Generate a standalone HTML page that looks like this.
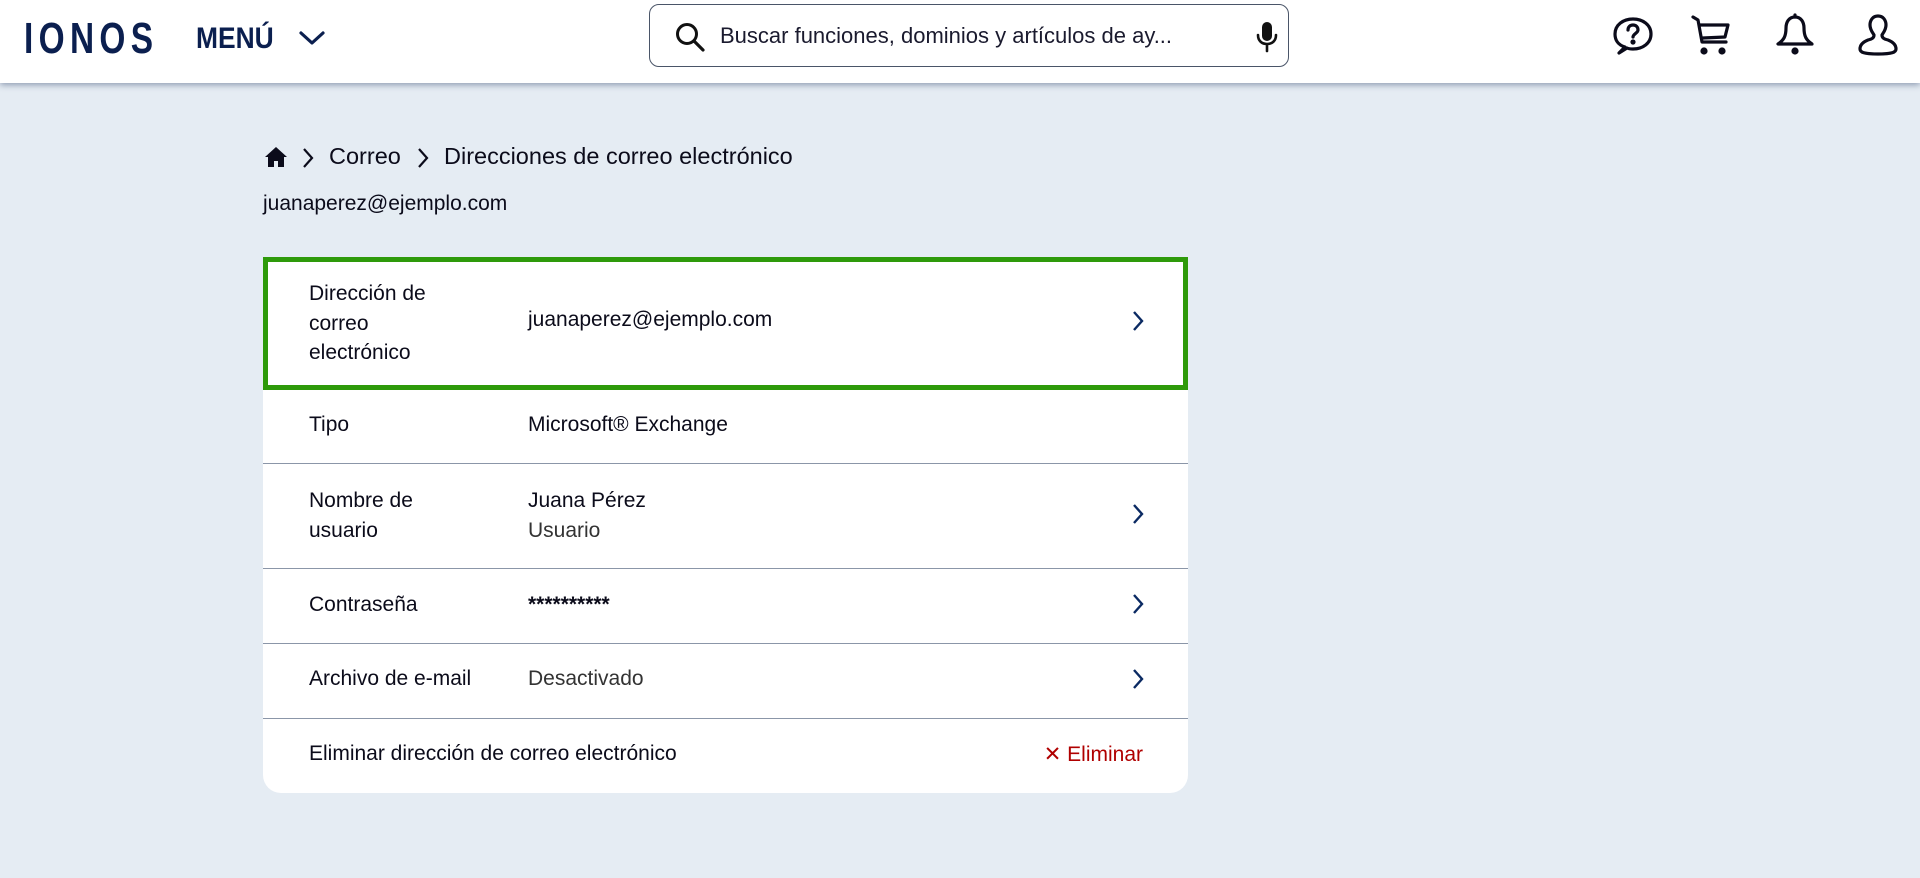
<!DOCTYPE html>
<html><head><meta charset="utf-8"><style>
*{box-sizing:border-box;margin:0;padding:0}
body{width:1920px;height:878px;background:#e5ecf3;font-family:"Liberation Sans",sans-serif;color:#0b0b1a;overflow:hidden;position:relative}
.hdr{position:absolute;left:0;top:0;width:1920px;height:83px;background:#fff;box-shadow:0 2px 6px rgba(40,60,100,.45)}
.logo{position:absolute;left:24px;top:14px;font-size:44px;font-weight:bold;color:#0b1f4f;letter-spacing:7px;transform:scaleX(.76);transform-origin:left;font-family:"Liberation Sans Narrow","Liberation Sans",sans-serif}
.menu{position:absolute;left:196px;top:22px;font-size:30px;font-weight:bold;color:#0b1f4f;transform:scaleX(.88);transform-origin:left}
.search{position:absolute;left:649px;top:4px;width:640px;height:63px;border:1.5px solid #4a5568;border-radius:10px}
.search span{position:absolute;left:70px;top:18px;font-size:22px;color:#1a1a2e;white-space:nowrap}
.abs{position:absolute}
.t{position:absolute;font-size:21px;white-space:nowrap;color:#0b0b1a}
.card{position:absolute;left:263px;top:257px;width:925px;height:536px;background:#fff;border-radius:0 0 18px 18px}
.green{position:absolute;left:263px;top:257px;width:925px;height:133px;border:5px solid #2e9a0a}
.line{position:absolute;left:263px;width:925px;height:1px;background:#8b96a8}
.chev{position:absolute;left:1131px}
</style></head><body>
<div class="hdr">
<div class="logo">IONOS</div>
<div class="menu">MENÚ</div>
<svg class="abs" style="left:298px;top:28px" width="28" height="20" viewBox="0 0 28 20"><path d="M3 5l11 10 11-10" fill="none" stroke="#0b1f4f" stroke-width="3.2" stroke-linecap="round" stroke-linejoin="round"/></svg>
<div class="search">
<svg class="abs" style="left:24px;top:16px" width="32" height="32" viewBox="0 0 32 32"><circle cx="13" cy="13" r="9.5" fill="none" stroke="#111" stroke-width="3"/><path d="M20 20l9 9" stroke="#111" stroke-width="3.2" stroke-linecap="round"/></svg>
<span>Buscar funciones, dominios y artículos de ay...</span>
<svg class="abs" style="left:606px;top:15px" width="22" height="34" viewBox="0 0 22 34"><rect x="6" y="2" width="10" height="19" rx="5" fill="#111"/><path d="M2 15c0 6 4 9 9 9s9-3 9-9M11 24v7" fill="none" stroke="#111" stroke-width="2.6" stroke-linecap="round"/></svg>
</div>
<svg class="abs" style="left:1612px;top:15px" width="42" height="42" viewBox="0 0 42 42" fill="none" stroke="#0b0b1a" stroke-width="3.2" stroke-linecap="round" stroke-linejoin="round"><path d="M13 32C6 30 3 25 3 19 3 10 11 4 21 4s18 6 18 15-8 15-18 15c-2 0-4 0-6-1l-8 5z"/><path d="M16 15c0-3 2-5 5-5s5 2 5 5c0 3-5 4-5 7"/><circle cx="21" cy="27" r="1" fill="#0b0b1a"/></svg>
<svg class="abs" style="left:1690px;top:13px" width="44" height="44" viewBox="0 0 44 44" fill="none" stroke="#0b0b1a" stroke-width="3.2" stroke-linecap="round" stroke-linejoin="round"><path d="M3 4l5 3 4 22h24M10 12h28l-3 12-22 1"/><circle cx="14" cy="38" r="2" fill="#0b0b1a"/><circle cx="32" cy="38" r="2" fill="#0b0b1a"/></svg>
<svg class="abs" style="left:1774px;top:13px" width="42" height="44" viewBox="0 0 42 44" fill="none" stroke="#0b0b1a" stroke-width="3.2" stroke-linecap="round" stroke-linejoin="round"><path d="M21 4c-6 0-9 5-9 11 0 8-2 12-8 16h34c-6-4-8-8-8-16 0-6-3-11-9-11z"/><path d="M21 2v2"/><circle cx="21" cy="38" r="2" fill="#0b0b1a"/></svg>
<svg class="abs" style="left:1858px;top:12px" width="40" height="46" viewBox="0 0 40 46" fill="none" stroke="#0b0b1a" stroke-width="3.2" stroke-linecap="round" stroke-linejoin="round"><path d="M20 4c-5 0-8 4-8 9 0 5 3 8 4 10 0 3-2 4-6 5-5 2-8 5-8 9 0 3 3 5 18 5s18-2 18-5c0-4-3-7-8-9-4-1-6-2-6-5 1-2 4-5 4-10 0-5-3-9-8-9z"/></svg>
</div>

<svg class="abs" style="left:264px;top:146px" width="24" height="22" viewBox="0 0 24 22"><path d="M12 1L1 11h3v10h6v-6h4v6h6V11h3z" fill="#0b0b1a"/></svg>
<svg class="abs" style="left:301px;top:147px" width="14" height="22" viewBox="0 0 14 22"><path d="M3 2l8 9-8 9" fill="none" stroke="#0b0b1a" stroke-width="2.2"/></svg>
<div class="t" style="left:329px;top:143px;font-size:23.5px">Correo</div>
<svg class="abs" style="left:416px;top:147px" width="14" height="22" viewBox="0 0 14 22"><path d="M3 2l8 9-8 9" fill="none" stroke="#0b0b1a" stroke-width="2.2"/></svg>
<div class="t" style="left:444px;top:143px;font-size:23.5px">Direcciones de correo electrónico</div>
<div class="t" style="left:263px;top:192px">juanaperez@ejemplo.com</div>

<div class="card"></div>
<div class="green"></div>
<div class="t" style="left:309px;top:279px;line-height:29.5px">Dirección de<br>correo<br>electrónico</div>
<div class="t" style="left:528px;top:308px">juanaperez@ejemplo.com</div>
<svg class="chev" style="top:309px" width="14" height="24" viewBox="0 0 14 24"><path d="M3 3l8 9-8 9" fill="none" stroke="#0b2a63" stroke-width="2.4"/></svg>

<div class="t" style="left:309px;top:413px">Tipo</div>
<div class="t" style="left:528px;top:413px">Microsoft® Exchange</div>
<div class="line" style="top:463px"></div>

<div class="t" style="left:309px;top:486px;line-height:30px">Nombre de<br>usuario</div>
<div class="t" style="left:528px;top:486px;line-height:30px">Juana Pérez<br><span style="color:#333">Usuario</span></div>
<svg class="chev" style="top:502px" width="14" height="24" viewBox="0 0 14 24"><path d="M3 3l8 9-8 9" fill="none" stroke="#0b2a63" stroke-width="2.4"/></svg>
<div class="line" style="top:568px"></div>

<div class="t" style="left:309px;top:593px">Contraseña</div>
<div class="t" style="left:528px;top:593px;font-weight:bold">**********</div>
<svg class="chev" style="top:592px" width="14" height="24" viewBox="0 0 14 24"><path d="M3 3l8 9-8 9" fill="none" stroke="#0b2a63" stroke-width="2.4"/></svg>
<div class="line" style="top:643px"></div>

<div class="t" style="left:309px;top:667px">Archivo de e-mail</div>
<div class="t" style="left:528px;top:667px;color:#333">Desactivado</div>
<svg class="chev" style="top:667px" width="14" height="24" viewBox="0 0 14 24"><path d="M3 3l8 9-8 9" fill="none" stroke="#0b2a63" stroke-width="2.4"/></svg>
<div class="line" style="top:718px"></div>

<div class="t" style="left:309px;top:742px">Eliminar dirección de correo electrónico</div>
<div class="t" style="right:777px;top:742px;color:#b00000">✕ Eliminar</div>
</body></html>
